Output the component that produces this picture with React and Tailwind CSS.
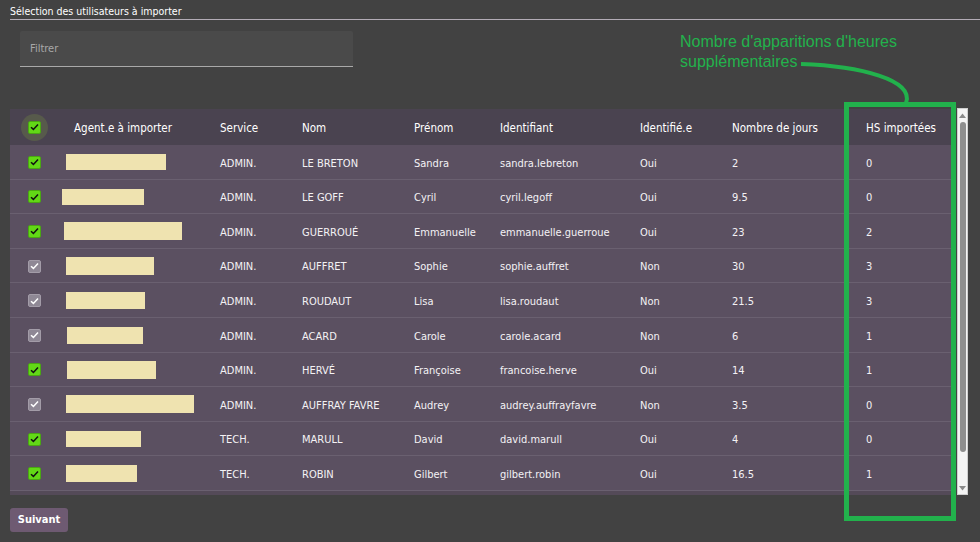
import React from "react";

const rows = [
  { sel: true, ml: 4, w: 100, h: 16, svc: "ADMIN.", nom: "LE BRETON", pre: "Sandra", id: "sandra.lebreton", ok: "Oui", j: "2", hs: "0" },
  { sel: true, ml: 0, w: 82, h: 16, svc: "ADMIN.", nom: "LE GOFF", pre: "Cyril", id: "cyril.legoff", ok: "Oui", j: "9.5", hs: "0" },
  { sel: true, ml: 2, w: 118, h: 18, svc: "ADMIN.", nom: "GUERROUÉ", pre: "Emmanuelle", id: "emmanuelle.guerroue", ok: "Oui", j: "23", hs: "2" },
  { sel: false, ml: 4, w: 88, h: 18, svc: "ADMIN.", nom: "AUFFRET", pre: "Sophie", id: "sophie.auffret", ok: "Non", j: "30", hs: "3" },
  { sel: false, ml: 4, w: 79, h: 17, svc: "ADMIN.", nom: "ROUDAUT", pre: "Lisa", id: "lisa.roudaut", ok: "Non", j: "21.5", hs: "3" },
  { sel: false, ml: 5, w: 76, h: 17, svc: "ADMIN.", nom: "ACARD", pre: "Carole", id: "carole.acard", ok: "Non", j: "6", hs: "1" },
  { sel: true, ml: 5, w: 89, h: 18, svc: "ADMIN.", nom: "HERVÉ", pre: "Françoise", id: "francoise.herve", ok: "Oui", j: "14", hs: "1" },
  { sel: false, ml: 4, w: 128, h: 18, svc: "ADMIN.", nom: "AUFFRAY FAVRE", pre: "Audrey", id: "audrey.auffrayfavre", ok: "Non", j: "3.5", hs: "0" },
  { sel: true, ml: 4, w: 75, h: 16, svc: "TECH.", nom: "MARULL", pre: "David", id: "david.marull", ok: "Oui", j: "4", hs: "0" },
  { sel: true, ml: 4, w: 71, h: 17, svc: "TECH.", nom: "ROBIN", pre: "Gilbert", id: "gilbert.robin", ok: "Oui", j: "16.5", hs: "1" },
];

const grid = "grid grid-cols-[52px_158px_82px_112px_86px_140px_92px_134px_1fr] items-center";

function Check({ on }) {
  return on ? (
    <div className="w-[13px] h-[13px] rounded-[2px] bg-[#62d816] border border-[#4aa812] flex items-center justify-center">
      <svg width="9" height="8" viewBox="0 0 9 8">
        <path d="M1 4.2 L3.4 6.4 L8 1.4" stroke="#111" strokeWidth="1.5" fill="none" />
      </svg>
    </div>
  ) : (
    <div className="w-[13px] h-[13px] rounded-[2px] bg-[#8f8895] border border-[#a39ca8] flex items-center justify-center">
      <svg width="9" height="8" viewBox="0 0 9 8">
        <path d="M1 4.2 L3.4 6.4 L8 1.4" stroke="#fff" strokeWidth="1.5" fill="none" />
      </svg>
    </div>
  );
}

export default function App() {
  return (
    <div
      className="relative w-[980px] h-[542px] overflow-hidden bg-[#424242] text-white"
      style={{ fontFamily: "'Liberation Sans Narrow', 'DejaVu Sans Condensed', 'Roboto', sans-serif" }}
    >
      <div className="pl-[10px]">
        <div className="h-[20px] border-b border-[#b3acb6] text-[10.5px] leading-[18px] pt-[2px]">
          Sélection des utilisateurs à importer
        </div>
      </div>

      <div className="ml-[20px] mt-[11px] w-[333px] h-[36px] bg-[#4a4a4a] rounded-t-[2px] border-b border-[#a9a9a9] flex items-center pl-[10px] pt-[2px] text-[11px] text-[#a8a8a8]">
        Filtrer
      </div>

      <div className="mt-[42px] ml-[10px] flex items-start">
        <div className="w-[946px] bg-[#544a58] pb-[4px]">
          <div className={`${grid} h-[36px] bg-[#4a4350] text-[11.5px] text-white`}>
            <div className="pl-[11px]">
              <div className="w-[27px] h-[27px] rounded-full bg-[#575a4b] flex items-center justify-center">
                <Check on />
              </div>
            </div>
            <div className="pl-[12px] pt-[3px]">Agent.e à importer</div>
            <div className="pt-[3px]">Service</div>
            <div className="pt-[3px]">Nom</div>
            <div className="pt-[3px]">Prénom</div>
            <div className="pt-[3px]">Identifiant</div>
            <div className="pt-[3px]">Identifié.e</div>
            <div className="pt-[3px]">Nombre de jours</div>
            <div className="pt-[3px]">HS importées</div>
          </div>
          {rows.map((r, i) => (
            <div
              key={i}
              className={`${grid} h-[34.6px] bg-[#5b5061] border-b border-[#6a6070] text-[11px] text-[#f4f2f5]`}
            >
              <div className="pl-[18px] pt-[1px]">
                <Check on={r.sel} />
              </div>
              <div className="pt-[1px]">
                <div className="bg-[#efe3b0]" style={{ marginLeft: r.ml, width: r.w, height: r.h }} />
              </div>
              <div className="pt-[4px]">{r.svc}</div>
              <div className="pt-[4px]">{r.nom}</div>
              <div className="pt-[4px]">{r.pre}</div>
              <div className="pt-[4px]">{r.id}</div>
              <div className="pt-[4px]">{r.ok}</div>
              <div className="pt-[4px]">{r.j}</div>
              <div className="pt-[4px]">{r.hs}</div>
            </div>
          ))}
        </div>

        <div className="ml-[1px] -mt-[1px] w-[11px] h-[387px] bg-[#f4f4f4] border border-[#cfcfcf] flex flex-col items-center">
          <svg width="7" height="6" viewBox="0 0 7 6" className="mt-[4px]">
            <path d="M0 5 L3.5 0.5 L7 5 Z" fill="#8a8a8a" />
          </svg>
          <div className="mt-[3px] w-[6px] h-[330px] rounded-[3px] bg-[#8e8e8e]" />
          <div className="flex-1" />
          <svg width="7" height="6" viewBox="0 0 7 6" className="mb-[3px]">
            <path d="M0 1 L3.5 5.5 L7 1 Z" fill="#8a8a8a" />
          </svg>
        </div>
      </div>

      <button className="mt-[13px] ml-[10px] w-[58px] h-[24px] rounded-[3px] bg-[#6e5a72] text-[11px] font-bold text-white flex items-center justify-center">
        Suivant
      </button>

      <div
        className="absolute left-[680px] top-[32px] text-[16px] leading-[20px] text-[#22b24c]"
        style={{ fontFamily: "'Liberation Sans', 'Roboto', sans-serif" }}
      >
        <div>Nombre d'apparitions d'heures</div>
        <div>supplémentaires</div>
      </div>

      <svg className="absolute left-0 top-0" width="980" height="542" viewBox="0 0 980 542">
        <path d="M801 64 C860 66 915 80 906 103" stroke="#22b14c" strokeWidth="4" fill="none" />
      </svg>

      <div className="absolute left-[844px] top-[102px] w-[112px] h-[419px] border-[5px] border-[#22b14c]" />
    </div>
  );
}
